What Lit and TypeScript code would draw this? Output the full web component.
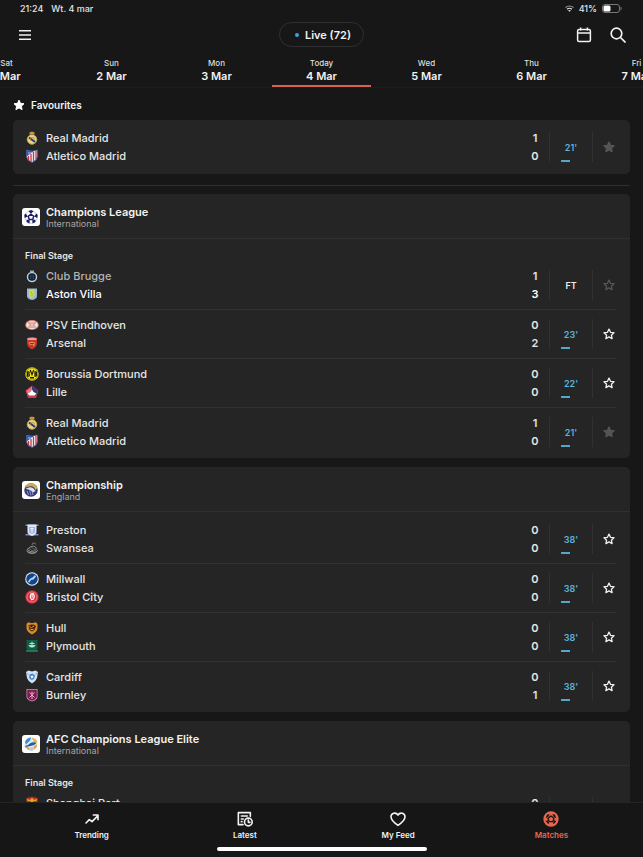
import { LitElement, html, svg, css, nothing, TemplateResult } from "lit";
import { customElement, property } from "lit/decorators.js";
import { classMap } from "lit/directives/class-map.js";

interface Team {
  name: string;
  crest: string;
  score: number;
  result?: "won" | "lost";
}

interface Match {
  teams: Team[];
  status: string;
  live: boolean;
  star: "on" | "off" | "muted";
}

interface Competition {
  name: string;
  region: string;
  logo: string;
  stage?: string;
  matches: Match[];
}

const STAR = "M12 2.2l3 6.5 7 .8-5.2 4.8 1.400 7-6.200-3.500-6.200 3.500 1.400-7L2 9.500l7-.8z";

// Club crests, each on a 28 by 28 grid.
const crests: Record<string, TemplateResult> = {
  real: svg`
    <path d="M9 7q-2-4 1-5 4-2 8 0 3 1 1 5z" fill="#a8743a"/>
    <path d="M10 4h8" stroke="#d8b04f" stroke-width="2"/>
    <circle cx="14" cy="17" r="9.500" fill="#e6d48a" stroke="#c9a649" stroke-width="2"/>
    <path d="M8 13l12 9" stroke="#2b3a78" stroke-width="4"/>
    <path d="M11 19q-2-5 3-6t5 4" fill="none" stroke="#a5813a" stroke-width="1.500"/>`,
  atletico: svg`
    <path d="M3 2q11 4 22 0v12q0 8-11 13Q3 22 3 14z" fill="#f2f2f5"/>
    <path d="M12 10v16M17 6v19M22 4v17M7 14v9" stroke="#cf2f45" stroke-width="2.600"/>
    <path d="M3 2q8 3 16 1.500L3 15z" fill="#2c5fae"/>
    <path d="M8 6v4M12 6v2" stroke="#dfe9f7" stroke-width="1.500"/>
    <path d="M3 2q11 4 22 0v12q0 8-11 13Q3 22 3 14z" fill="none" stroke="#35539b" stroke-width="1.500"/>`,
  brugge: svg`
    <path d="M10 6l1-4 3 2 3-2 1 4z" fill="#9bb3c4"/>
    <circle cx="14" cy="16" r="10.500" fill="#b9cbd7"/>
    <circle cx="14" cy="16" r="7.500" fill="#111c2b"/>
    <path d="M11 12v8M14 11v10M17 12v8" stroke="#2e6d9d" stroke-width="1"/>`,
  villa: svg`
    <path d="M4 3h20v15q0 6-10 8-10-2-10-8z" fill="#95b9d6"/>
    <path d="M8 5h11v12l-5 6q-6-2-6-5z" fill="#d2d64f"/>
    <path d="M12 9l2 4v6" fill="none" stroke="#a7b06a" stroke-width="2"/>`,
  psv: svg`
    <ellipse cx="14" cy="14" rx="13.500" ry="10" fill="#d98579"/>
    <ellipse cx="14" cy="14" rx="11.500" ry="8" fill="#f5e6e1"/>
    <path d="M6 10h16M6 18h16" stroke="#d66a5c" stroke-width="2"/>
    <path d="M8 14h5M15 14h5" stroke="#8c6f95" stroke-width="2"/>`,
  arsenal: svg`
    <path d="M4 4q10-4 20 0v10q0 8-10 13Q4 22 4 14z" fill="#c8342f"/>
    <path d="M5 5q9-3 18 0v3H5z" fill="#e8a49b"/>
    <path d="M7 14q6-5 14 0l-2 2v4h-3v-3l-6 1z" fill="#e0904f"/>
    <path d="M10 15h8" stroke="#a52622" stroke-width="2"/>`,
  dortmund: svg`
    <circle cx="14" cy="14" r="13.500" fill="#f0e21b"/>
    <circle cx="14" cy="14" r="12" fill="none" stroke="#5e590f" stroke-width="1"/>
    <path d="M5 9.500v9h2.500q2.500-2.500 0-4.500 2-2.500 0-4.500zM20 9.500v9h2q3-2.500 0-4.500 2.500-2.500 0-4.500zM10.500 6l3.500 9 3.500-9" fill="none" stroke="#1d1b08" stroke-width="2.400"/>
    <path d="M10 21.500h8" stroke="#1d1b08" stroke-width="3"/>`,
  lille: svg`
    <path d="M14 1l13 10-5 15H6L1 11z" fill="#cb3b52"/>
    <path d="M14 2l12 9-4 10-8-9z" fill="#39386f"/>
    <path d="M3 12l11-9v7l-7 9z" fill="#dd7a8c"/>
    <path d="M5 17l6-3 3-5 3 5 6 3-4 4H9z" fill="#fff"/>`,
  preston: svg`
    <path d="M1 3h26v3H1zM1 22h26v3H1z" fill="#7d89bd"/>
    <path d="M5 3h18v15q0 5-9 8-9-3-9-8z" fill="#dde6fa"/>
    <path d="M8 8h12v11q-6 5-12 0z" fill="#9fb3e6"/>
    <path d="M11 11h6M11 14h6M12 18h4" stroke="#eef3ff" stroke-width="2"/>`,
  swansea: svg`
    <path d="M2 18q12 10 25-1-4 9-13 9T2 18z" fill="#8d8d8d"/>
    <path d="M4 17q7-7 13-7 6 2 6 6l-4 4-8 1z" fill="none" stroke="#929292" stroke-width="2"/>
    <path d="M8 15l8 5M12 12l8 5" stroke="#777" stroke-width="1.500"/>
    <path d="M14 8q0-5 4-4t4 3" fill="none" stroke="#777" stroke-width="2"/>`,
  millwall: svg`
    <circle cx="14" cy="14" r="13.500" fill="#e9f1fa"/>
    <circle cx="14" cy="14" r="11.500" fill="#12458d"/>
    <path d="M6 20q3-8 9-9l5-5 2 3-5 6-5 1-3 5z" fill="#b7d3f0"/>`,
  bristol: svg`
    <circle cx="14" cy="14" r="13.500" fill="#d52d3c"/>
    <circle cx="14" cy="14" r="10" fill="none" stroke="#ef9aa1" stroke-width="1.500"/>
    <path d="M11 7l6-1 3 6-2 7-5 2-4-7z" fill="#fff"/>
    <path d="M14 9l-1 8M17 11l-2 7" stroke="#d52d3c" stroke-width="1.500"/>`,
  hull: svg`
    <path d="M3 6q3-5 6-3 5 2 10 0 3-2 6 3v8q0 7-11 13Q3 21 3 14z" fill="#dc8a22"/>
    <path d="M7 9l5-2h5l5 3-3 8-5 3-5-3z" fill="#492b10"/>
    <path d="M9 11l4 2 5-3M11 17h6" stroke="#eb9f35" stroke-width="2"/>`,
  plymouth: svg`
    <path d="M3 2h22v17q-1 5-11 7Q4 24 3 19z" fill="#115c43"/>
    <path d="M9 9h10M14 5v8M8 13h12l-3 3h-6z" stroke="#b8e0cd" stroke-width="2" fill="#b8e0cd"/>
    <path d="M2 24h24" stroke="#2d8064" stroke-width="3"/>`,
  cardiff: svg`
    <path d="M2 4l5-3 7 2 7-2 5 3-2 12q-3 8-10 11Q7 24 4 16z" fill="#cfe1f5"/>
    <path d="M9 9l6-2 5 4-2 7-5 2-5-4z" fill="#4a84c9"/>
    <path d="M11 12l5-1 1 4-4 2z" fill="#eef6ff"/>
    <path d="M3 6l4 3M25 6l-4 3" stroke="#7da2d1" stroke-width="2"/>`,
  burnley: svg`
    <path d="M3 2h22v16q-1 6-11 9Q4 24 3 18z" fill="#d08cae"/>
    <path d="M4.500 3.500h19v14q-1 5-9.500 8-8.500-3-9.500-8z" fill="#7c1d50"/>
    <path d="M14 7v15M9 9l5 4 5-4M9 19l5-5 5 5" stroke="#e1b3c8" stroke-width="2" fill="none"/>`,
  shanghai: svg`
    <path d="M3 5q4-4 6-2 5-3 10 0 2-2 6 2v10q0 7-11 12Q3 22 3 15z" fill="#c62f1c"/>
    <path d="M3 5l6 3 5-4 5 4 6-3-2 5H5z" fill="#e9a21c"/>
    <circle cx="14" cy="15" r="5" fill="#e9a21c"/>`,
};

// Competition logos, each on a 36 by 36 white tile.
const logos: Record<string, TemplateResult> = {
  ucl: svg`
    <circle cx="18" cy="18" r="12.500" fill="none" stroke="#8d8db8" stroke-width="1"/>
    <path d="M18 12.500l5.500 4-2 6.500h-7l-2-6.500z" fill="none" stroke="#1d1d66" stroke-width="3"/>
    <path d="M18 4l5 2.500-5 5-5-5zM31.500 14l-1 6-6-3 4-6zM27 28l-6 3-.500-6.500 6-1.500zM9 28l6 3 .500-6.500-6-1.500zM4.500 14l1 6 6-3-4-6z" fill="#1d1d66"/>`,
  efl: svg`
    <circle cx="18" cy="18" r="13.500" fill="#363a78"/>
    <path d="M5 14Q9 4 19 4.500q9 1 12 9l-4 5q-3-8-9-8-7 0-13 3.500z" fill="#cdae58"/>
    <path d="M7 16q8-6 15-2l5 6-5 3q-6-7-15-7z" fill="#dfe0ef"/>
    <path d="M10 20l3 8M15 19l3 10M20 21l2 7" stroke="#aab0dc" stroke-width="1.600"/>`,
  afc: svg`
    <circle cx="18" cy="18" r="13" fill="#dcebf7"/>
    <path d="M6 14Q9 5 18 5l-2 6-8 8z" fill="#3c8fd0"/>
    <path d="M19 5q9 1 12 9l-6 3-3-7z" fill="#edb451"/>
    <path d="M5 22q8-1 12-6 6-3 12 0-5 6-12 6t-9 4z" fill="#245ca8"/>
    <path d="M6 22l5 7 6 1-3-5zM30 18q1 7-6 11l-1-6z" fill="#e9a544"/>
    <path d="M16 26l4-2 4 3-3 5h-4z" fill="#b4cbe0"/>`,
};

const t = (name: string, crest: string, score: number, result?: "won" | "lost"): Team => ({ name, crest, score, result });

const madridDerby: Match = {
  teams: [t("Real Madrid", "real", 1), t("Atletico Madrid", "atletico", 0)],
  status: "21'",
  live: true,
  star: "on",
};

const live = (status: string, ...teams: Team[]): Match => ({ teams, status, live: true, star: "off" });

const competitions: Competition[] = [
  {
    name: "Champions League",
    region: "International",
    logo: "ucl",
    stage: "Final Stage",
    matches: [
      {
        teams: [t("Club Brugge", "brugge", 1, "lost"), t("Aston Villa", "villa", 3, "won")],
        status: "FT",
        live: false,
        star: "muted",
      },
      live("23'", t("PSV Eindhoven", "psv", 0), t("Arsenal", "arsenal", 2)),
      live("22'", t("Borussia Dortmund", "dortmund", 0), t("Lille", "lille", 0)),
      madridDerby,
    ],
  },
  {
    name: "Championship",
    region: "England",
    logo: "efl",
    matches: [
      live("38'", t("Preston", "preston", 0), t("Swansea", "swansea", 0)),
      live("38'", t("Millwall", "millwall", 0), t("Bristol City", "bristol", 0)),
      live("38'", t("Hull", "hull", 0), t("Plymouth", "plymouth", 0)),
      live("38'", t("Cardiff", "cardiff", 0), t("Burnley", "burnley", 1)),
    ],
  },
  {
    name: "AFC Champions League Elite",
    region: "International",
    logo: "afc",
    stage: "Final Stage",
    matches: [{ teams: [t("Shanghai Port", "shanghai", 0)], status: "", live: false, star: "muted" }],
  },
];

const days = [
  ["Sat", "1 Mar"],
  ["Sun", "2 Mar"],
  ["Mon", "3 Mar"],
  ["Today", "4 Mar"],
  ["Wed", "5 Mar"],
  ["Thu", "6 Mar"],
  ["Fri", "7 Mar"],
];

const base = css`
  * {
    box-sizing: border-box;
  }
  ul,
  h2,
  h3,
  p {
    margin: 0;
    padding: 0;
    list-style: none;
    font-weight: inherit;
  }
  button {
    margin: 0;
    padding: 0;
    border: 0;
    background: none;
    color: inherit;
    font: inherit;
    cursor: pointer;
  }
  a {
    color: inherit;
    text-decoration: none;
  }
  svg {
    display: block;
    flex: none;
  }
`;

@customElement("match-row")
class MatchRow extends LitElement {
  @property({ attribute: false }) match!: Match;

  static styles = [
    base,
    css`
      :host {
        display: flex;
        align-items: center;
        padding: 6px 0;
        min-height: 48px;
      }
      .teams {
        flex: 1;
        min-width: 0;
        min-height: 36px;
      }
      .team {
        display: flex;
        align-items: center;
        gap: 7px;
        height: 18px;
        padding-right: 8px;
        font-size: 11px;
        font-weight: 500;
        color: #e6e6e6;
      }
      .team.lost .name {
        color: #b4b4b4;
      }
      .team.won {
        color: #fff;
      }
      .name {
        flex: 1;
      }
      .score {
        width: 12px;
        text-align: center;
        font-weight: 600;
      }
      .status {
        display: grid;
        width: 44px;
        height: 30px;
        border: solid #313131;
        border-width: 0 1px;
        font-size: 9px;
        font-weight: 600;
        color: #ececec;
      }
      .status.live {
        color: #5cb3dc;
      }
      .minute,
      .pulse {
        grid-area: 1 / 1;
      }
      .minute {
        place-self: center;
      }
      .pulse {
        place-self: end start;
        width: 9px;
        height: 2px;
        margin-left: 11px;
        background: #4fa9cc;
      }
      .star {
        display: flex;
        justify-content: flex-end;
        width: 23px;
        padding-right: 1px;
        color: #f0f0f0;
      }
      .star.on,
      .star.muted {
        color: #555;
      }
    `,
  ];

  render() {
    const m = this.match;
    return html`
      <ul class="teams">
        ${m.teams.map(
          (team) => html`<li class=${classMap({ team: true, won: team.result === "won", lost: team.result === "lost" })}>
            <svg width="14" height="14" viewBox="0 0 28 28" aria-hidden="true">${crests[team.crest]}</svg>
            <span class="name">${team.name}</span>
            <span class="score">${team.score}</span>
          </li>`
        )}
      </ul>
      <div class=${classMap({ status: true, live: m.live })}>
        <span class="minute">${m.status}</span>
        ${m.live ? html`<span class="pulse"></span>` : nothing}
      </div>
      <button
        class=${classMap({ star: true, [m.star]: true })}
        aria-label="Favourite"
        aria-pressed=${m.star === "on" ? "true" : "false"}
      >
        <svg width="12" height="12" viewBox="0 0 24 24">
          <path
            d=${STAR}
            fill=${m.star === "on" ? "currentColor" : "none"}
            stroke="currentColor"
            stroke-width="2.600"
            stroke-linejoin="round"
          />
        </svg>
      </button>
    `;
  }
}

@customElement("app-root")
class AppRoot extends LitElement {
  static styles = [
    base,
    css`
      :host {
        display: flex;
        flex-direction: column;
        height: 100vh;
        overflow: hidden;
        background: #171717;
        color: #f2f2f2;
        font-family: Inter, "Noto Sans", sans-serif;
      }
      .device {
        display: flex;
        align-items: center;
        justify-content: space-between;
        height: 17px;
        padding: 0 21px 0 20px;
        font-size: 9px;
        font-weight: 500;
        color: #e4e4e4;
      }
      .clock,
      .power {
        display: flex;
        align-items: center;
      }
      .clock {
        gap: 8px;
      }
      .power {
        gap: 5px;
      }
      .toolbar {
        display: grid;
        grid-template-columns: 1fr auto 1fr;
        align-items: center;
        height: 35px;
        padding: 0 17px;
      }
      .menu {
        justify-self: start;
      }
      .live-pill {
        display: flex;
        align-items: center;
        justify-content: center;
        gap: 6px;
        height: 25px;
        padding: 0 12px 0 15px;
        border: 1px solid #303030;
        border-radius: 13px;
        font-size: 11px;
        font-weight: 600;
      }
      .dot {
        width: 4px;
        height: 4px;
        border-radius: 2px;
        background: #35a7df;
      }
      .actions {
        display: flex;
        justify-self: end;
        gap: 18px;
      }
      .days {
        display: flex;
        flex: none;
        justify-content: center;
        height: 36px;
        overflow: hidden;
        border-bottom: 1px solid #1d1d1d;
      }
      .day {
        display: flex;
        flex: 0 0 99px;
        flex-direction: column;
        align-items: center;
        margin: 0 3px;
        padding-top: 5px;
        border-bottom: 2px solid transparent;
        font-size: 11px;
        font-weight: 600;
        line-height: 14px;
      }
      .day.current {
        border-color: #d8624c;
      }
      .weekday {
        font-size: 8px;
        font-weight: 500;
        line-height: 12px;
        color: #dedede;
      }
      .feed {
        flex: 1;
        min-height: 0;
        padding: 0 13px;
        overflow-y: auto;
        scrollbar-width: none;
      }
      .favourites-title {
        display: flex;
        align-items: center;
        gap: 6px;
        height: 32px;
        padding-top: 2px;
        font-size: 10px;
        font-weight: 600;
      }
      .card {
        margin-bottom: 9px;
        border-radius: 5px;
        background: #252525;
      }
      .pinned {
        padding: 3px 14px 3px 12px;
      }
      .rule {
        margin: 11px 0 8px;
        border: 0;
        border-top: 1px solid #303030;
      }
      .league {
        display: flex;
        align-items: center;
        gap: 6px;
        padding: 11px 9px 9px;
        border-bottom: 1px solid #303030;
      }
      .logo {
        border-radius: 3px;
        background: #fff;
      }
      .league-name {
        font-size: 11px;
        font-weight: 600;
        line-height: 14px;
      }
      .region {
        font-size: 9px;
        line-height: 10px;
        color: #a6a6a6;
      }
      .matches {
        padding: 3px 14px 2px 12px;
      }
      .stage {
        padding: 12px 12px 0;
        font-size: 9px;
        font-weight: 600;
        line-height: 10px;
        color: #e8e8e8;
      }
      .stage + .matches {
        padding-top: 0;
      }
      .match + .match {
        border-top: 1px solid #313131;
      }
      .tabs {
        flex: none;
        padding: 8px 15px 6px;
        border-top: 1px solid #242424;
        background: #161616;
      }
      .tab-list {
        display: flex;
      }
      .tab {
        display: flex;
        flex: 1;
        flex-direction: column;
        align-items: center;
        gap: 2px;
        font-size: 8px;
        font-weight: 600;
        line-height: 12px;
      }
      .tab.current {
        color: #e8664c;
      }
      .home-bar {
        width: 210px;
        height: 4px;
        margin: 6px auto 0;
        border-radius: 2px;
        background: #fff;
      }
    `,
  ];

  private tab(label: string, icon: TemplateResult, current = false) {
    return html`<a class=${classMap({ tab: true, current })} href="#${label.toLowerCase().replace(" ", "-")}">
      <svg width="16" height="16" viewBox="0 0 24 24" fill="none" stroke="currentColor" stroke-width="2.400" stroke-linecap="round" stroke-linejoin="round">${icon}</svg>
      ${label}
    </a>`;
  }

  render() {
    return html`
      <div class="device">
        <div class="clock"><span>21:24</span><span>Wt. 4 mar</span></div>
        <div class="power">
          <svg width="9" height="7" viewBox="0 0 18 14" fill="none" stroke="#e4e4e4" stroke-width="2.400">
            <path d="M1 5q8-6 16 0" stroke="#999" />
            <path d="M4 8.500q5-4 10 0" />
            <path d="M9 13.500L6 11q3-2 6 0z" fill="#e4e4e4" stroke="none" />
          </svg>
          <span>41%</span>
          <svg width="20" height="9" viewBox="0 0 20 9">
            <rect x=".5" y=".5" width="17" height="8" rx="2.500" fill="none" stroke="#777" />
            <rect x="1.500" y="1.500" width="7" height="6" rx="1.500" fill="#fff" />
            <path d="M19 3v3" stroke="#777" />
          </svg>
        </div>
      </div>
      <header class="toolbar">
        <button class="menu" aria-label="Menu">
          <svg width="16" height="16" viewBox="0 0 16 16" stroke="#f2f2f2" stroke-width="1.600">
            <path d="M2 3.800h12M2 8h12M2 12.200h12" />
          </svg>
        </button>
        <button class="live-pill"><span class="dot"></span>Live (72)</button>
        <div class="actions">
          <button aria-label="Calendar">
            <svg width="16" height="16" viewBox="0 0 16 16" fill="none" stroke="#f2f2f2" stroke-width="1.500">
              <rect x="1.600" y="2.600" width="12.800" height="11.800" rx="1.500" />
              <path d="M1.600 6h12.800M4.600 .6v3M11.400 .6v3" />
            </svg>
          </button>
          <button aria-label="Search">
            <svg width="16" height="16" viewBox="0 0 16 16" fill="none" stroke="#f2f2f2" stroke-width="1.700">
              <circle cx="6.500" cy="6.500" r="5.300" />
              <path d="M10.500 10.500l5 5" />
            </svg>
          </button>
        </div>
      </header>
      <nav class="days" aria-label="Match day">
        ${days.map(
          ([weekday, date]) => html`<button class=${classMap({ day: true, current: weekday === "Today" })}>
            <span class="weekday">${weekday}</span>${date}
          </button>`
        )}
      </nav>
      <main class="feed">
        <h2 class="favourites-title">
          <svg width="12" height="12" viewBox="0 0 24 24">
            <path d=${STAR} fill="#fff" stroke="#fff" stroke-width="2" stroke-linejoin="round" />
          </svg>
          Favourites
        </h2>
        <section class="card pinned"><match-row .match=${madridDerby}></match-row></section>
        <hr class="rule" />
        ${competitions.map(
          (c) => html`<section class="card">
            <header class="league">
              <svg class="logo" width="18" height="18" viewBox="0 0 36 36" aria-hidden="true">${logos[c.logo]}</svg>
              <div>
                <h2 class="league-name">${c.name}</h2>
                <p class="region">${c.region}</p>
              </div>
            </header>
            ${c.stage ? html`<h3 class="stage">${c.stage}</h3>` : nothing}
            <ul class="matches">
              ${c.matches.map((m) => html`<li class="match"><match-row .match=${m}></match-row></li>`)}
            </ul>
          </section>`
        )}
      </main>
      <footer class="tabs">
        <nav class="tab-list" aria-label="Main">
          ${this.tab("Trending", svg`<path d="M3 18l5-5 4 3 9-9M14 6h7v7"/>`)}
          ${this.tab(
            "Latest",
            svg`<path d="M9 20.500H2V2.500h18V8M6.500 7.500h9M6.500 12h3M6.500 16h1"/><circle cx="17" cy="16.500" r="5.800"/><path d="M17 13.500v3.500h2.500"/>`
          )}
          ${this.tab(
            "My Feed",
            svg`<path d="M12 21.500C5 17 1.500 13 1.500 8.800 1.500 3 9 1 12 6.200 15 1 22.500 3 22.500 8.800c0 4.200-3.500 8.200-10.500 12.700z"/>`
          )}
          ${this.tab(
            "Matches",
            svg`<circle cx="12" cy="12" r="11.500" fill="currentColor" stroke="none"/><path d="M12 7.500l4.500 3.300-1.700 5.200H9.200l-1.700-5.200z" stroke="#161616" stroke-width="2"/><path d="M6 5.500l4-1-2 4-4 2.500zM18 5.500l-4-1 2 4 4 2.500zM4 15l3-1 2 4-1 2zM20 15l-3-1-2 4 1 2z" fill="#161616" stroke="none"/>`,
            true
          )}
        </nav>
        <div class="home-bar"></div>
      </footer>
    `;
  }
}
